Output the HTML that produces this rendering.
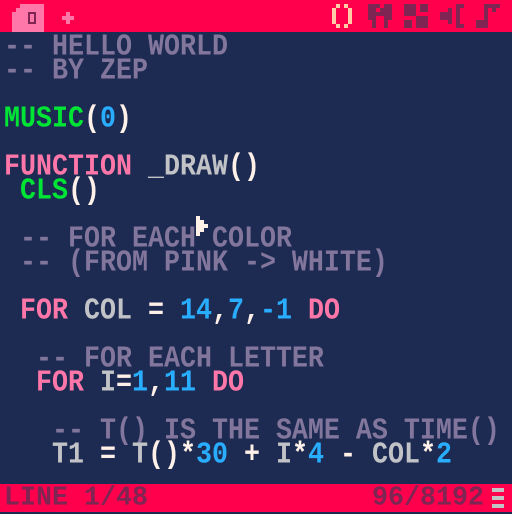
<!DOCTYPE html>
<html><head><style>
body{margin:0;width:512px;height:512px;overflow:hidden;background:#1d2b53;position:relative;font-family:"Liberation Mono",monospace;font-weight:bold}
.bar{position:absolute;left:0;width:512px;background:#ff004d}
.l{position:absolute;left:4px;font-size:26.67px;line-height:26.67px;white-space:pre;transform:scaleY(1.136);transform-origin:0 0;letter-spacing:0}
.c{color:#83769c}.w{color:#fff1e8}.g{color:#c2c3c7}.p{color:#ff77a8}.gr{color:#00e436}.b{color:#29adff}.d{color:#7e2553}
.r{position:absolute}
</style></head><body>
<div class="bar" style="top:0;height:32px"></div>
<div class="bar" style="top:484px;height:28px"></div>
<!-- tab -->
<div class="r" style="left:20px;top:4px;width:24px;height:28px;background:#ff77a8"></div>
<div class="r" style="left:12px;top:12px;width:8px;height:20px;background:#ff77a8"></div>
<div class="r" style="left:16px;top:8px;width:4px;height:4px;background:#ff77a8"></div>
<div class="r" style="left:28px;top:12px;width:8px;height:12px;border:0;background:#7e2553"></div>
<div class="r" style="left:30px;top:14px;width:4px;height:8px;background:#ff77a8"></div>
<div class="r" style="left:62px;top:16px;width:12px;height:4px;background:#ff77a8"></div>
<div class="r" style="left:66px;top:12px;width:4px;height:12px;background:#ff77a8"></div>
<!-- right icons -->
<svg class="r" style="left:0;top:0" width="512" height="32" shape-rendering="crispEdges">
<g fill="#ffccaa"><rect x="332" y="8" width="4" height="16"/><rect x="336" y="4" width="4" height="4"/><rect x="336" y="24" width="4" height="4"/><rect x="348" y="8" width="4" height="16"/><rect x="344" y="4" width="4" height="4"/><rect x="344" y="24" width="4" height="4"/></g>
<g fill="#7e2553">
<rect x="368" y="4" width="24" height="16"/><rect x="372" y="20" width="4" height="8"/><rect x="384" y="20" width="4" height="8"/>
<rect x="404" y="4" width="12" height="12"/><rect x="416" y="16" width="12" height="12"/><rect x="420" y="4" width="8" height="8"/><rect x="404" y="20" width="8" height="8"/>
<rect x="440" y="12" width="8" height="8"/><rect x="448" y="8" width="4" height="16"/><rect x="456" y="4" width="8" height="24"/>
<rect x="476" y="20" width="12" height="8"/><rect x="484" y="4" width="4" height="20"/><rect x="488" y="4" width="12" height="4"/><rect x="492" y="8" width="4" height="4"/>
</g>
<g fill="#ff004d"><rect x="376" y="8" width="4" height="4"/><rect x="380" y="4" width="4" height="4"/><rect x="460" y="8" width="4" height="16"/><rect x="376" y="16" width="8" height="4"/></g>
</svg>
<div class="l c" style="top:33px">-- HELLO WORLD</div>
<div class="l c" style="top:57px">-- BY ZEP</div>
<div class="l" style="top:105px"><span class="gr">MUSIC</span><span class="w">(</span><span class="b">0</span><span class="w">)</span></div>
<div class="l" style="top:153px"><span class="p">FUNCTION</span> <span class="g">_DRAW</span><span class="w">()</span></div>
<div class="l" style="top:177px"> <span class="gr">CLS</span><span class="w">()</span></div>
<div class="l c" style="top:225px"> -- FOR EACH COLOR</div>
<div class="l c" style="top:249px"> -- (FROM PINK -&gt; WHITE)</div>
<div class="l" style="top:297px"> <span class="p">FOR</span> <span class="g">COL</span> <span class="w">=</span> <span class="b">14</span><span class="w">,</span><span class="b">7</span><span class="w">,</span><span class="b">-1</span> <span class="p">DO</span></div>
<div class="l c" style="top:345px">  -- FOR EACH LETTER</div>
<div class="l" style="top:369px">  <span class="p">FOR</span> <span class="g">I</span><span class="w">=</span><span class="b">1</span><span class="w">,</span><span class="b">11</span> <span class="p">DO</span></div>
<div class="l c" style="top:417px">   -- T() IS THE SAME AS TIME()</div>
<div class="l" style="top:441px">   <span class="g">T1</span> <span class="w">= </span><span class="g">T</span><span class="w">()*</span><span class="b">30</span> <span class="w">+</span> <span class="g">I</span><span class="w">*</span><span class="b">4</span> <span class="w">-</span> <span class="g">COL</span><span class="w">*</span><span class="b">2</span></div>
<div class="l d" style="top:485px;transform:scaleY(1.02)">LINE 1/48</div>
<div class="l d" style="top:485px;left:372px;transform:scaleY(1.02)">96/8192</div>
<svg class="r" style="left:0;top:484px" width="512" height="28" shape-rendering="crispEdges"><g fill="#c2c3c7"><rect x="492" y="4" width="12" height="4"/><rect x="492" y="12" width="12" height="4"/><rect x="492" y="20" width="12" height="4"/></g></svg>
<!-- cursor -->
<svg class="r" style="left:196px;top:216px" width="16" height="24" shape-rendering="crispEdges"><path d="M0 0h4v4h4v4h4v4h-4v4h-4v4h-4z" fill="#fff1e8"/></svg>
</body></html>
